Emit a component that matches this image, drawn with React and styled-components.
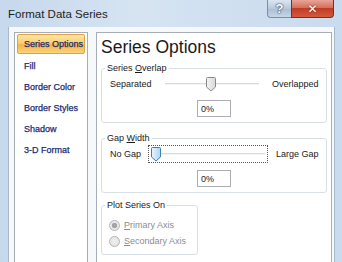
import styled, { createGlobalStyle } from "styled-components";

const GlobalStyle = createGlobalStyle`
  html, body {
    margin: 0;
    padding: 0;
    width: 342px;
    height: 262px;
    overflow: hidden;
    background: #d4e2f1;
  }
  * { box-sizing: border-box; }
`;

const UI = `"Liberation Sans", Arial, sans-serif`;

function Thumb({ blue }) {
  const fill = blue ? "url(#tb)" : "url(#tg)";
  const stroke = blue ? "#3c7fb1" : "#8a8a8a";
  return (
    <svg width="10" height="15" viewBox="0 0 10 15">
      <defs>
        <linearGradient id="tg" x1="0" x2="1" y1="0" y2="0">
          <stop offset="0" stopColor="#f4f4f4" />
          <stop offset="1" stopColor="#d9d9d9" />
        </linearGradient>
        <linearGradient id="tb" x1="0" x2="1" y1="0" y2="0">
          <stop offset="0" stopColor="#e9f5fd" />
          <stop offset="1" stopColor="#a9d6f5" />
        </linearGradient>
      </defs>
      <path
        d="M1.5 0.5 H8.5 Q9.5 0.5 9.5 1.5 V10 L5 14 L0.5 10 V1.5 Q0.5 0.5 1.5 0.5 Z"
        fill={fill}
        stroke={stroke}
      />
    </svg>
  );
}

function SliderRow({ left, right, cols, thumbAt, focused }) {
  return (
    <>
      <Row $cols={cols}>
        <Label>{left}</Label>
        <SliderBox $focused={focused}>
          <Track />
          <ThumbHolder style={{ left: thumbAt }}>
            <Thumb blue={focused} />
          </ThumbHolder>
        </SliderBox>
        <Label $pad={right === "Overlapped" ? 10 : 8}>{right}</Label>
      </Row>
      <ValueBox>0%</ValueBox>
    </>
  );
}

export default function App() {
  const items = ["Fill", "Border Color", "Border Styles", "Shadow", "3-D Format"];
  return (
    <>
      <GlobalStyle />
      <Window>
        <TitleBar>
          <Title>Format Data Series</Title>
          <Caption>
            <HelpBtn>?</HelpBtn>
            <CloseBtn>✕</CloseBtn>
          </Caption>
        </TitleBar>
        <Client>
          <NavList>
            <NavItem $active>Series Options</NavItem>
            {items.map((t) => (
              <NavItem key={t}>{t}</NavItem>
            ))}
          </NavList>
          <Page>
            <Heading>Series Options</Heading>
            <Group $mb={9}>
              <Legend>Series <u>O</u>verlap</Legend>
              <SliderRow left="Separated" right="Overlapped" cols="52px 100px 1fr" thumbAt={43} />
            </Group>
            <Group $mb={6}>
              <Legend>Gap <u>W</u>idth</Legend>
              <SliderRow left="No Gap" right="Large Gap" cols="38px 120px 1fr" thumbAt={2} focused />
            </Group>
            <Group $narrow $dim>
              <Legend>Plot Series On</Legend>
              <Radio>
                <Dot $checked />
                <span><u>P</u>rimary Axis</span>
              </Radio>
              <Radio>
                <Dot />
                <span><u>S</u>econdary Axis</span>
              </Radio>
            </Group>
          </Page>
        </Client>
      </Window>
    </>
  );
}

// STYLED COMPONENTS

const Window = styled.div`
  width: 342px;
  height: 262px;
  display: flex;
  flex-direction: column;
  background: linear-gradient(90deg, #c6d8ec, #d6e4f2 40%, #cfdff0 70%, #c9dbee);
  font-family: ${UI};
  overflow: hidden;
`;

const TitleBar = styled.div`
  height: 27px;
  flex: none;
  display: flex;
  align-items: flex-start;
  justify-content: space-between;
  padding-left: 8px;
  padding-right: 8px;
`;

const Title = styled.div`
  font-size: 11.5px;
  color: #1e1e1e;
  line-height: 12px;
  margin-top: 8px;
`;

const Caption = styled.div`
  display: flex;
  height: 18px;
`;

const HelpBtn = styled.div`
  width: 24px;
  height: 18px;
  border: 1px solid #7d8fa3;
  border-top: none;
  border-right: none;
  border-radius: 0 0 0 4px;
  background: linear-gradient(#dbe6f2, #b8c9dc 50%, #a9bdd3 51%, #c7d6e6);
  display: flex;
  align-items: center;
  justify-content: center;
  color: #fff;
  font: bold 13px "Liberation Sans", sans-serif;
  text-shadow: 0 0 2px #3e516a, 0 0 1px #3e516a, 0 0 1px #3e516a;
`;

const CloseBtn = styled.div`
  width: 43px;
  height: 18px;
  border: 1px solid #7a2d22;
  border-top: none;
  border-radius: 0 0 4px 0;
  background: linear-gradient(#e8a596, #d4705c 45%, #c13c25 50%, #d25a3e);
  display: flex;
  align-items: center;
  justify-content: center;
  color: #fff;
  font: bold 12px "DejaVu Sans", sans-serif;
  text-shadow: 0 0 2px #6d1a10;
`;

const Client = styled.div`
  flex: 1;
  margin: 0 7px 0 8px;
  background: #f7f8f9;
  border-left: 1px solid #a9b8c8;
  border-right: 1px solid #a9b8c8;
  display: flex;
  gap: 8px;
  padding: 5px 2px 0 5px;
`;

const NavList = styled.div`
  width: 74px;
  flex: none;
  background: #fff;
  border: 1px solid #a6adb6;
  border-bottom: none;
  padding: 1px 2px;
  display: flex;
  flex-direction: column;
`;

const NavItem = styled.div`
  height: ${(p) => (p.$active ? "20px" : "21px")};
  margin-bottom: ${(p) => (p.$active ? "1px" : "0")};
  padding-left: 6px;
  display: flex;
  align-items: center;
  font-size: 9px;
  color: #1b2c72;
  -webkit-text-stroke: 0.25px #1b2c72;
  white-space: nowrap;
  border: 1px solid ${(p) => (p.$active ? "#e0a14a" : "transparent")};
  border-radius: 2px;
  background: ${(p) =>
    p.$active
      ? "linear-gradient(#fde6a6, #fbcf6e 45%, #f8b444 55%, #fbd27c)"
      : "transparent"};
`;

const Page = styled.div`
  flex: 1;
  background: #fff;
  border: 1px solid #a6adb6;
  border-bottom: none;
  padding: 3px 4px 0 4px;
  display: flex;
  flex-direction: column;
  align-items: flex-start;
`;

const Heading = styled.div`
  font-size: 17.5px;
  line-height: 20px;
  color: #1a1a1a;
  margin-top: 1px;
  margin-bottom: 5px;
`;

const Group = styled.fieldset`
  margin: 0 0 ${(p) => p.$mb || 0}px 0;
  width: ${(p) => (p.$narrow ? "97px" : "226px")};
  border: 1px solid #d7e0e6;
  border-radius: 3px;
  padding: 0 0 5px 0;
  display: flex;
  flex-direction: column;
  color: ${(p) => (p.$dim ? "#8d8d8d" : "#1a1a1a")};
`;

const Legend = styled.legend`
  margin-left: 3px;
  padding: 0 2px;
  font-size: 9px;
  line-height: 12px;
  color: #1a1a1a;
`;

const Row = styled.div`
  display: grid;
  grid-template-columns: ${(p) => p.$cols};
  align-items: center;
  padding: 1px 0 0 8px;
  margin-bottom: 7px;
`;

const Label = styled.div`
  font-size: 9px;
  color: #1a1a1a;
  white-space: nowrap;
  padding-left: ${(p) => p.$pad || 0}px;
`;

const SliderBox = styled.div`
  position: relative;
  height: 18px;
  border: 1px dotted ${(p) => (p.$focused ? "#555" : "transparent")};
`;

const Track = styled.div`
  position: absolute;
  left: 2px;
  right: 2px;
  top: 7px;
  height: 2px;
  background: #dadada;
  border-bottom: 1px solid #f4f4f4;
`;

const ThumbHolder = styled.div`
  position: absolute;
  top: 1px;
  line-height: 0;
`;

const ValueBox = styled.div`
  align-self: center;
  width: 34px;
  height: 17px;
  border: 1px solid #abadb3;
  font-size: 9px;
  color: #1a1a1a;
  padding-left: 3px;
  display: flex;
  align-items: center;
`;

const Radio = styled.div`
  display: flex;
  align-items: center;
  gap: 4px;
  padding-left: 7px;
  height: 16px;
  font-size: 9px;
  &:first-of-type { margin-top: 6px; }
`;

const Dot = styled.span`
  width: 11px;
  height: 11px;
  border-radius: 50%;
  border: 1px solid #b5b5b5;
  background: radial-gradient(circle, ${(p) => (p.$checked ? "#a4a4a4 0 2.5px, #e8e8e8 3px" : "#f0f0f0 0, #e0e0e0 100%")});
  flex: none;
`;
